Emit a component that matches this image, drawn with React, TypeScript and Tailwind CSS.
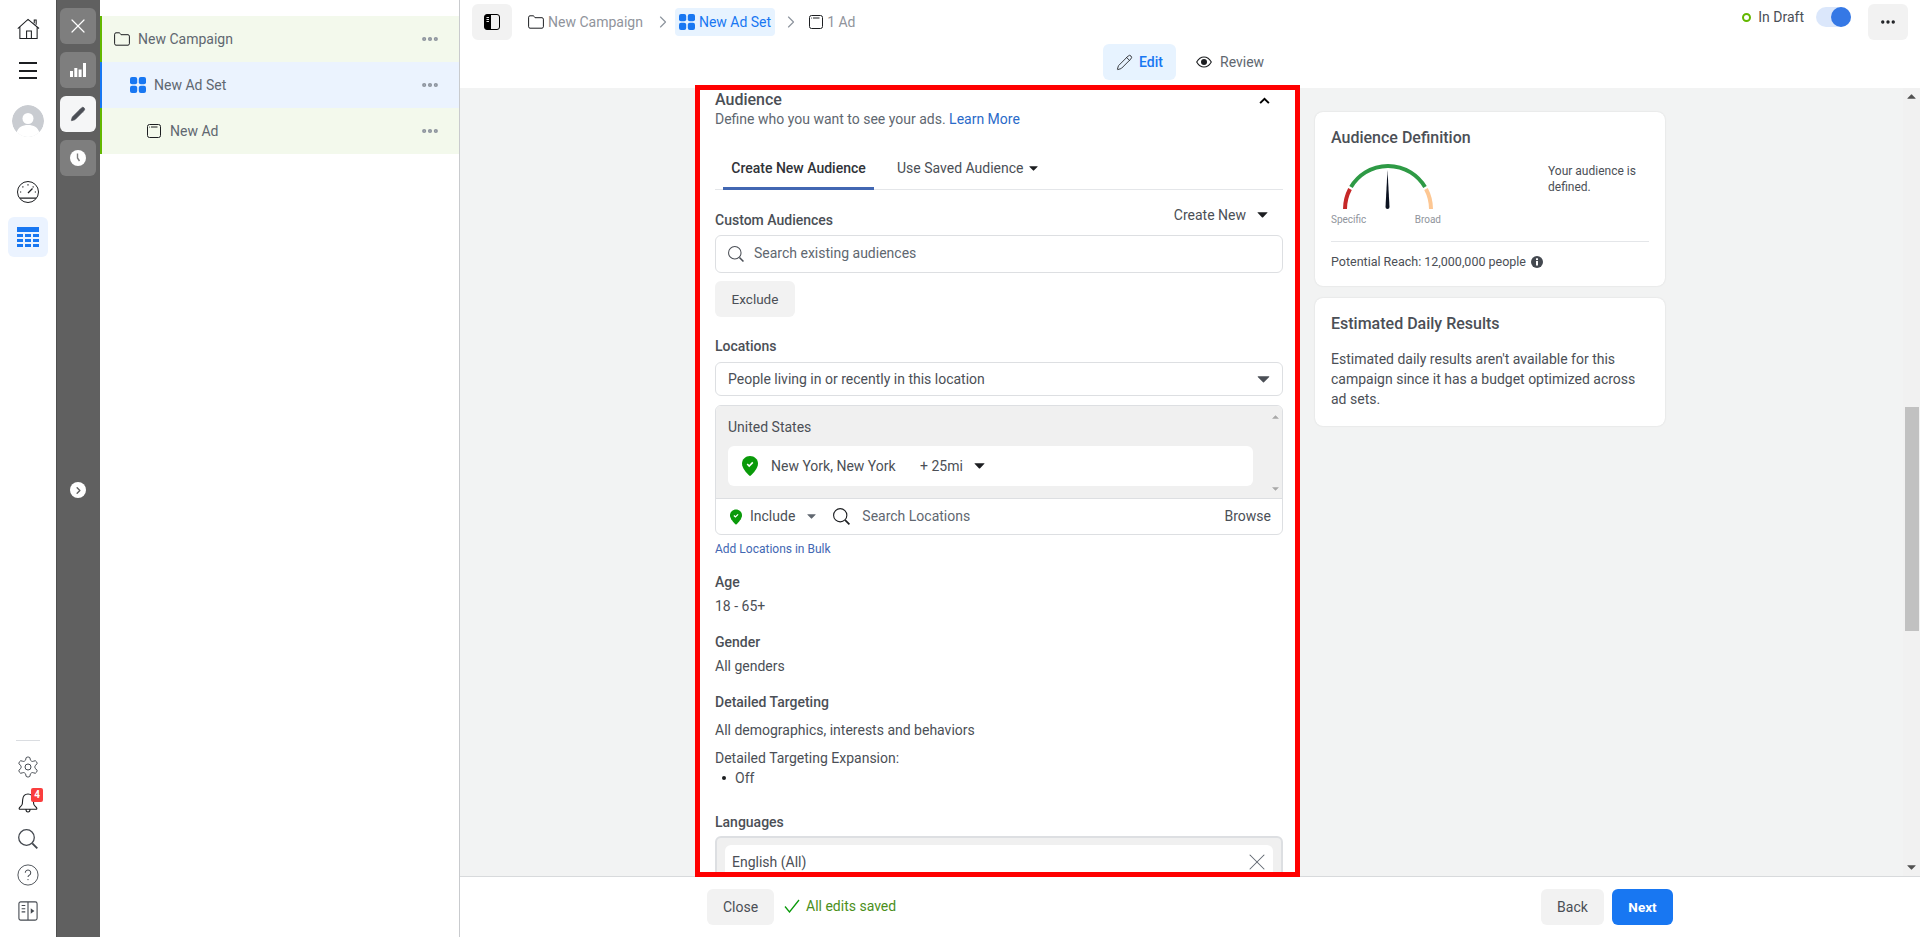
import React from "react";
import { ChevronRight, X, MoreHorizontal, Pencil } from "lucide-react";

const font = { fontFamily: "Roboto, sans-serif" };

function Caret({ cls }: { cls: string }) {
  return (
    <svg viewBox="0 0 10 6" className={cls} fill="currentColor"><path d="M0.3 0.3h9.4a.3.3 0 0 1 .2.5L5.4 5.4a.6.6 0 0 1-.8 0L.1.8A.3.3 0 0 1 .3.3z" /></svg>
  );
}
function Mag({ cls }: { cls: string }) {
  return (
    <svg viewBox="0 0 20 20" className={cls} fill="none" stroke="currentColor">
      <circle cx="8.500" cy="8.500" r="7.800" strokeWidth="1.300" />
      <path d="M14.300 14.300 19.300 19.300" strokeWidth="1.900" />
    </svg>
  );
}
function Folder({ cls }: { cls: string }) {
  return (
    <svg viewBox="0 0 16 14" className={cls} fill="none" stroke="currentColor" strokeWidth="1"><path d="M.6 2.2c0-.8.6-1.4 1.4-1.4h3c.5 0 .8.2 1.1.6l.9 1.3h7c.7 0 1.4.6 1.4 1.4v7.700c0 .8-.7 1.400-1.400 1.400H2c-.8 0-1.400-.6-1.400-1.400z" /></svg>
  );
}
function Grid4({ cls }: { cls: string }) {
  return (
    <svg viewBox="0 0 16 16" className={cls} fill="#1877f2">
      <rect x="0" y="0" width="7.200" height="7.200" rx="2" /><rect x="8.800" y="0" width="7.200" height="7.200" rx="2" />
      <rect x="0" y="8.800" width="7.200" height="7.200" rx="2" /><rect x="8.800" y="8.800" width="7.200" height="7.200" rx="2" />
    </svg>
  );
}
function AdIcon({ cls }: { cls: string }) {
  return (
    <svg viewBox="0 0 14 14" className={cls} fill="none" stroke="currentColor" strokeWidth="1">
      <rect x=".5" y=".5" width="13" height="13" rx="2" /><path d="M4 3h6.500" /><circle cx="2.600" cy="3" r=".5" fill="currentColor" stroke="none" />
    </svg>
  );
}
function Pin({ cls }: { cls: string }) {
  return (
    <svg viewBox="0 0 16 20" className={cls}>
      <path fill="#0a9a0a" d="M8 0c4.400 0 8 3.300 8 7.600 0 4.500-4.600 9.700-7.200 12-.5.4-1.100.4-1.600 0C4.600 17.300 0 12.100 0 7.600 0 3.300 3.600 0 8 0z" />
      <path fill="none" stroke="#fff" strokeWidth="1.600" d="M5.200 8l2 2 3.600-3.600" />
    </svg>
  );
}
function TreeRow({ label, indent, icon, active }: { label: string; indent: string; icon: React.ReactNode; active?: boolean }) {
  return (
    <div className={`h-[46px] flex items-center border-l-2 pr-[19px] ${active ? "bg-[#ebf3fe] border-[#1877f2]" : "bg-[#f3f9ec] border-[#63b800]"} ${indent}`}>
      {icon}
      <span className="text-[14px] text-[#606770] flex-1">{label}</span>
      <MoreHorizontal className="w-[20px] h-[20px] text-[#8d949e]" strokeWidth={3} />
    </div>
  );
}
function Label({ children, cls }: { children: React.ReactNode; cls: string }) {
  return <div className={`text-[14px] leading-[16px] font-medium text-[#4b4f56] ${cls}`}>{children}</div>;
}
function Body({ children, cls }: { children: React.ReactNode; cls: string }) {
  return <div className={`text-[14px] leading-[16px] text-[#4b4f56] ${cls}`}>{children}</div>;
}

function IconRail() {
  return (
    <div className="w-[56px] shrink-0 flex flex-col items-center bg-white text-[#1c1e21]">
      <svg viewBox="0 0 24 22" className="w-[23px] h-[22px] mt-[18px]" fill="none" stroke="#1c1e21" strokeWidth="1.100">
        <path d="M.8 10.500 11.500 1 23 10.500M3 8.800V21h18V8.800M10 21v-8h5v8M18 5V1.600h2v5" />
      </svg>
      <div className="mt-[22px] flex flex-col gap-[5.500px] w-[18px]">
        <div className="h-[2px] bg-[#1c1e21]" /><div className="h-[2px] bg-[#1c1e21]" /><div className="h-[2px] bg-[#1c1e21]" />
      </div>
      <svg viewBox="0 0 32 32" className="w-[32px] h-[32px] mt-[26px] rounded-full">
        <circle cx="16" cy="16" r="16" fill="#c9ccd1" />
        <circle cx="16" cy="13.500" r="5.500" fill="#fff" /><path d="M4.500 28c1.500-6 6-8 11.500-8s10 2 11.500 8A16 16 0 0 1 16 32 16 16 0 0 1 4.500 28z" fill="#fff" />
      </svg>
      <svg viewBox="0 0 22 22" className="w-[22px] h-[22px] mt-[44px]" fill="none" stroke="#1c1e21" strokeWidth="1">
        <circle cx="11" cy="11" r="10.500" />
        <path d="M11 12l4.500-4.500M3 17.200h16" strokeWidth="1.300" />
        <path d="M11 3.300v1.200M5.500 5.500l.8.8M16.500 5.500l-.8.8M3 11h1.200M19 11h-1.200" strokeWidth="1.200" />
      </svg>
      <div className="w-[40px] h-[40px] mt-[14px] rounded-[6px] bg-[#ebf3ff] flex items-center justify-center">
        <svg viewBox="0 0 22 20" className="w-[22px] h-[20px]" fill="#1877f2">
          <rect x="0" y="0" width="22" height="5" />
          <rect x="0" y="7" width="6" height="3" /><rect x="8" y="7" width="6" height="3" /><rect x="16" y="7" width="6" height="3" />
          <rect x="0" y="12" width="6" height="3" /><rect x="8" y="12" width="6" height="3" /><rect x="16" y="12" width="6" height="3" />
          <rect x="0" y="17" width="6" height="3" /><rect x="8" y="17" width="6" height="3" /><rect x="16" y="17" width="6" height="3" />
        </svg>
      </div>
      <div className="flex-1" />
      <div className="w-[24px] h-px bg-[#dadde1]" />
      <svg viewBox="0 0 24 24" className="w-[24px] h-[24px] mt-[14px]" fill="none" stroke="#444950" strokeWidth="1">
        <path d="M12.220 2h-.44a2 2 0 0 0-2 2v.18a2 2 0 0 1-1 1.730l-.43.25a2 2 0 0 1-2 0l-.15-.08a2 2 0 0 0-2.730.73l-.22.380a2 2 0 0 0 .73 2.730l.15.100a2 2 0 0 1 1 1.720v.510a2 2 0 0 1-1 1.740l-.15.090a2 2 0 0 0-.73 2.730l.22.380a2 2 0 0 0 2.730.73l.15-.08a2 2 0 0 1 2 0l.43.250a2 2 0 0 1 1 1.730V20a2 2 0 0 0 2 2h.44a2 2 0 0 0 2-2v-.18a2 2 0 0 1 1-1.730l.43-.25a2 2 0 0 1 2 0l.15.080a2 2 0 0 0 2.730-.73l.22-.390a2 2 0 0 0-.73-2.730l-.15-.080a2 2 0 0 1-1-1.740v-.500a2 2 0 0 1 1-1.740l.15-.090a2 2 0 0 0 .73-2.730l-.22-.380a2 2 0 0 0-2.730-.73l-.15.080a2 2 0 0 1-2 0l-.43-.250a2 2 0 0 1-1-1.730V4a2 2 0 0 0-2-2z" />
        <circle cx="12" cy="12" r="3" />
      </svg>
      <div className="relative mt-[10px] w-[22px] h-[24px] flex justify-center">
        <svg viewBox="0 0 20 20" className="w-[20px] h-[20px] mt-[4px]" fill="none" stroke="#1c1e21" strokeWidth="1.100">
          <path d="M10 1c3 0 5 2.200 5.300 5.500l.4 4.500c.2 1.600 2.300 2.800 3 4 .4.700 0 1.200-.7 1.200H2c-.7 0-1.100-.5-.7-1.200.7-1.200 2.800-2.400 3-4l.4-4.500C5 3.200 7 1 10 1zM8 16.500c0 3.300 4 3.300 4 0" />
        </svg>
        <span className="absolute left-[14px] top-[-1px] w-[12px] h-[14px] rounded-[2px] bg-[#fa3e3e] text-white text-[10px] leading-[14px] font-bold text-center">4</span>
      </div>
      <Mag cls="w-[20px] h-[20px] mt-[16px] text-[#444950]" />
      <svg viewBox="0 0 24 24" className="w-[22px] h-[22px] mt-[15px]" fill="none" stroke="#444950" strokeWidth="1">
        <circle cx="12" cy="12" r="11" />
        <path d="M9 9.500a3 3 0 1 1 4.500 2.600c-1 .6-1.500 1.100-1.500 2.200" strokeWidth="1.100" /><circle cx="12" cy="17" r=".7" fill="#444950" stroke="none" />
      </svg>
      <svg viewBox="0 0 22 22" className="w-[20px] h-[20px] mt-[15px] mb-[16px]" fill="none" stroke="#444950" strokeWidth="1.200">
        <rect x="1" y="1" width="20" height="20" rx="2" /><path d="M11 1v20M4 5h4M4 8.500h4M4 12h4" />
        <path d="M14 8l4 3-4 3z" fill="#444950" stroke="none" />
      </svg>
    </div>
  );
}

function ToolRail() {
  const btn = "w-[36px] h-[36px] rounded-[6px] flex items-center justify-center";
  return (
    <div className="relative w-[44px] shrink-0 bg-[#606060] shadow-[inset_1px_0_0_#4f4f4f] flex flex-col items-center pt-[8px] gap-[8px]">
      <div className={`${btn} bg-[#7e7e7e]`}><X className="w-[24px] h-[24px] text-white" strokeWidth={1.200} /></div>
      <div className={`${btn} bg-[#7e7e7e]`}>
        <svg viewBox="0 0 16 14" className="w-[16px] h-[14px]" fill="#fff"><rect x="0" y="8" width="3" height="6" /><rect x="4.300" y="5" width="3" height="9" /><rect x="8.600" y="6.500" width="3" height="7.500" /><rect x="13" y="0" width="3" height="14" /></svg>
      </div>
      <div className={`${btn} bg-[#f5f6f7]`}><Pencil className="w-[16px] h-[16px] text-[#4b4f56]" fill="#4b4f56" strokeWidth={1} /></div>
      <div className={`${btn} bg-[#7e7e7e]`}>
        <svg viewBox="0 0 16 16" className="w-[16px] h-[16px]"><circle cx="8" cy="8" r="8" fill="#fff" /><path d="M7.500 3.500V8l2 3" fill="none" stroke="#7e7e7e" strokeWidth="1.400" /></svg>
      </div>
      <div className="absolute left-[14px] top-[482px] w-[16px] h-[16px] rounded-full bg-white flex items-center justify-center">
        <ChevronRight className="w-[11px] h-[11px] text-[#606060]" strokeWidth={3} />
      </div>
    </div>
  );
}

function TreePanel() {
  return (
    <div className="w-[360px] shrink-0 pt-[16px] border-r border-[#c9cbce] bg-white">
      <TreeRow label="New Campaign" indent="pl-[12px]" icon={<Folder cls="w-[16px] h-[14px] mr-[8px] text-[#1c1e21]" />} />
      <TreeRow label="New Ad Set" active indent="pl-[28px]" icon={<Grid4 cls="w-[16px] h-[16px] mr-[8px]" />} />
      <TreeRow label="New Ad" indent="pl-[45px]" icon={<AdIcon cls="w-[14px] h-[14px] mr-[9px] text-[#1c1e21]" />} />
    </div>
  );
}

function TopBar() {
  return (
    <div className="h-[88px] shrink-0 bg-white">
      <div className="flex items-center h-[44px] px-[12px]">
        <div className="w-[40px] h-[36px] rounded-[6px] bg-[#f2f2f2] flex items-center justify-center">
          <svg viewBox="0 0 16 16" className="w-[16px] h-[16px]"><rect x="0.500" y="0.500" width="15" height="15" rx="2.500" fill="#f2f2f2" stroke="#000" /><path d="M3 .5h4v15H3a2.500 2.500 0 0 1-2.500-2.500V3A2.500 2.500 0 0 1 3 .5z" fill="#000" /><path d="M2.500 3.500h2.500M2.500 5.500h2.500M2.500 7.500h2.500" stroke="#fff" strokeWidth=".9" /></svg>
        </div>
        <Folder cls="w-[16px] h-[14px] ml-[16px] mr-[4px] text-[#1c1e21]" />
        <span className="text-[14px] text-[#90949c]">New Campaign</span>
        <ChevronRight className="w-[20px] h-[20px] ml-[10px] mr-[2px] text-[#8d949e]" strokeWidth={1.400} />
        <div className="flex items-center h-[28px] px-[4px] rounded-[4px] bg-[#e7f3ff]">
          <Grid4 cls="w-[16px] h-[16px] mr-[4px]" />
          <span className="text-[14px] text-[#1877f2]">New Ad Set</span>
        </div>
        <ChevronRight className="w-[20px] h-[20px] ml-[6px] mr-[4px] text-[#8d949e]" strokeWidth={1.400} />
        <AdIcon cls="w-[14px] h-[14px] ml-[4px] mr-[4px] text-[#1c1e21]" />
        <span className="text-[14px] text-[#90949c]">1 Ad</span>
        <div className="flex-1" />
        <div className="flex items-center self-start h-[34px]">
          <div className="w-[9px] h-[9px] rounded-full border-[2.500px] border-[#63b800]" />
          <span className="ml-[7px] text-[14px] text-[#4b4f56]">In Draft</span>
          <div className="relative ml-[12px] w-[35px] h-[20px] rounded-full bg-[#dbe7fb]">
            <div className="absolute right-0 top-0 w-[20px] h-[20px] rounded-full bg-[#3578e5]" />
          </div>
        </div>
        <div className="ml-[17px] w-[40px] h-[36px] rounded-[6px] bg-[#f2f2f2] flex items-center justify-center">
          <MoreHorizontal className="w-[18px] h-[18px] text-[#1c1e21]" strokeWidth={2.500} />
        </div>
      </div>
      <div className="flex items-center h-[36px] pl-[643px]">
        <div className="flex items-center h-[36px] w-[73px] pl-[13px] gap-[6px] rounded-[6px] bg-[#e7f3ff]">
          <Pencil className="w-[17px] h-[17px] text-[#1c1e21]" strokeWidth={1.200} />
          <span className="text-[14px] font-medium text-[#1877f2]">Edit</span>
        </div>
        <div className="flex items-center h-[36px] ml-[20px] gap-[8px]">
          <svg viewBox="0 0 16 12" className="w-[16px] h-[12px]">
            <path d="M.7 6C2.500 2.800 5 1 8 1s5.500 1.800 7.300 5C13.500 9.200 11 11 8 11S2.500 9.200.7 6z" fill="none" stroke="#1c1e21" strokeWidth="1.100" />
            <circle cx="8" cy="6" r="3" fill="#1c1e21" />
          </svg>
          <span className="text-[14px] text-[#606770]">Review</span>
        </div>
      </div>
    </div>
  );
}

function Form() {
  return (
    <div className="w-[595px] h-full bg-white pl-[15px] pr-[12px] overflow-hidden">
      <div className="text-[16px] leading-[20px] font-medium text-[#4b4f56] pt-[2px] flex justify-between items-center">
        <span>Audience</span>
        <svg viewBox="0 0 12 8" className="w-[11px] h-[7px] mr-[13px]" fill="none" stroke="#000" strokeWidth="2.200"><path d="M1 7l5-5 5 5" /></svg>
      </div>
      <div className="text-[14px] leading-[16px] text-[#606770] mt-[1px]">Define who you want to see your ads. <span className="text-[#2a6ac9]">Learn More</span></div>
      <div className="mt-[22px] h-[41px] border-b border-[#e4e6e9] flex pl-[8px] text-[14px]">
        <div className="w-[151px] h-[41px] border-b-[3px] border-[#4267b2] text-center font-medium pt-[11px] leading-[16px] text-[#303338]">Create New Audience</div>
        <div className="ml-[23px] pt-[11px] leading-[16px] text-[#4b4f56] flex items-start gap-[5px]">Use Saved Audience <Caret cls="w-[9px] h-[5px] mt-[6px] text-[#1c1e21]" /></div>
      </div>
      <div className="flex justify-between mt-[17px]">
        <Label cls="mt-[5px]">Custom Audiences</Label>
        <div className="text-[14px] leading-[16px] h-[16px] text-[#4b4f56] flex items-center mr-[15px]">Create New <Caret cls="w-[11px] h-[6px] ml-[11px] text-[#1c1e21]" /></div>
      </div>
      <div className="mt-[7px] h-[38px] rounded-[6px] border border-[#dddfe2] flex items-center pl-[12px] pb-[1px]">
        <Mag cls="w-[16px] h-[16px] text-[#4b4f56]" />
        <span className="ml-[10px] text-[14px] text-[#606770]">Search existing audiences</span>
      </div>
      <div className="mt-[8px] w-[80px] h-[36px] rounded-[6px] bg-[#f2f2f2] flex items-center justify-center text-[13.500px] text-[#4b4f56]">Exclude</div>
      <Label cls="mt-[21px]">Locations</Label>
      <div className="mt-[8px] h-[34px] rounded-[6px] border border-[#dddfe2] flex items-center justify-between px-[12px] text-[14px] text-[#4b4f56]">
        People living in or recently in this location
        <Caret cls="w-[13px] h-[7px] text-[#4b4f56]" />
      </div>
      <div className="mt-[9px] h-[130px] rounded-[6px] border border-[#dddfe2] overflow-hidden">
        <div className="h-[93px] bg-[#f0f0f0] border-b border-[#dddfe2] pl-[12px] relative">
          <div className="text-[14px] leading-[16px] text-[#4b4f56] pt-[13px] h-[29px]">United States</div>
          <div className="mt-[11px] w-[525px] h-[40px] rounded-[6px] bg-white flex items-center pl-[14px] text-[14px] text-[#4b4f56]">
            <Pin cls="w-[16px] h-[20px]" />
            <span className="ml-[13px] w-[149px]">New York, New York</span>
            <span>+ 25mi</span>
            <Caret cls="w-[11px] h-[6px] ml-[11px] text-[#1c1e21]" />
          </div>
          <Caret cls="absolute right-[3px] top-[9px] w-[7px] h-[4px] rotate-180 text-[#a8a8a8]" />
          <Caret cls="absolute right-[3px] bottom-[7px] w-[7px] h-[4px] text-[#a8a8a8]" />
        </div>
        <div className="h-[35px] flex items-center pl-[14px] pr-[11px] text-[14px] text-[#4b4f56]">
          <Pin cls="w-[12px] h-[16px]" />
          <span className="ml-[8px]">Include</span>
          <Caret cls="w-[9px] h-[5px] ml-[12px] text-[#606770]" />
          <Mag cls="w-[17px] h-[17px] ml-[17px] text-[#1c1e21]" />
          <span className="ml-[12px] text-[#606770]">Search Locations</span>
          <div className="flex-1" />
          <span>Browse</span>
        </div>
      </div>
      <div className="mt-[6px] text-[12px] leading-[16px] text-[#4267b2]">Add Locations in Bulk</div>
      <Label cls="mt-[17px]">Age</Label>
      <Body cls="mt-[8px]">18 - 65+</Body>
      <Label cls="mt-[20px]">Gender</Label>
      <Body cls="mt-[8px]">All genders</Body>
      <Label cls="mt-[20px]">Detailed Targeting</Label>
      <Body cls="mt-[12px]">All demographics, interests and behaviors</Body>
      <Body cls="mt-[12px]">Detailed Targeting Expansion:</Body>
      <div className="mt-[4px] flex items-center pl-[7px] text-[14px] leading-[16px] text-[#4b4f56]">
        <span className="w-[4px] h-[4px] rounded-full bg-[#1c1e21]" /><span className="ml-[9px]">Off</span>
      </div>
      <Label cls="mt-[28px]">Languages</Label>
      <div className="mt-[6px] h-[60px] rounded-[6px] border-2 border-[#dddfe2] bg-[#f0f0f0] pt-[7px] px-[8px]">
        <div className="h-[40px] rounded-[6px] bg-white flex items-center justify-between pl-[7px] pr-[2px] pb-[6px] text-[14px] text-[#4b4f56]">
          English (All)
          <X className="w-[28px] h-[28px] text-[#606770]" strokeWidth={0.900} />
        </div>
      </div>
    </div>
  );
}

function SideCards() {
  return (
    <div className="w-[350px] ml-[20px] pt-[24px] flex flex-col gap-[12px] shrink-0">
      <div className="h-[174px] bg-white rounded-[8px] shadow-[0_0_2px_rgba(0,0,0,0.12)] px-[16px]">
        <div className="pt-[16px] text-[16px] leading-[20px] font-medium text-[#4b4f56]">Audience Definition</div>
        <div className="flex mt-[12px] h-[66px]">
          <div className="w-[110px] shrink-0">
            <svg viewBox="0 0 110 50" className="w-[110px] h-[50px]" fill="none" strokeWidth="4">
              <path d="M14 49A43 43 0 0 1 19 29" stroke="#c62828" />
              <path d="M20 27A43 43 0 0 1 94 27" stroke="#2e9a45" />
              <path d="M95 29A43 43 0 0 1 100 49" stroke="#fdc793" />
              <path d="M56.500 10 54.500 47a2 2 0 0 0 4 0z" fill="#0b1220" />
            </svg>
            <div className="flex justify-between mt-[4px] text-[10px] leading-[12px] text-[#90949c]"><span>Specific</span><span>Broad</span></div>
          </div>
          <div className="ml-[107px] mt-[3px] text-[12px] leading-[16px] text-[#4b4f56] w-[100px]">Your audience is defined.</div>
        </div>
        <div className="border-t border-[#e4e6e9] mt-[15px] pt-[12px] flex items-center text-[12.500px] leading-[16px] text-[#4b4f56]">
          Potential Reach: 12,000,000 people
          <svg viewBox="0 0 12 12" className="w-[12px] h-[12px] ml-[5px]"><circle cx="6" cy="6" r="6" fill="#444950" /><rect x="5" y="5" width="2" height="4.500" fill="#fff" /><rect x="5" y="2.300" width="2" height="1.800" fill="#fff" /></svg>
        </div>
      </div>
      <div className="h-[128px] bg-white rounded-[8px] shadow-[0_0_2px_rgba(0,0,0,0.12)] px-[16px]">
        <div className="pt-[16px] text-[16px] leading-[20px] font-medium text-[#4b4f56]">Estimated Daily Results</div>
        <div className="mt-[15px] text-[14px] leading-[20px] text-[#4b4f56]">Estimated daily results aren't available for this campaign since it has a budget optimized across ad sets.</div>
      </div>
    </div>
  );
}

function Scrollbar() {
  return (
    <div className="absolute right-0 top-0 bottom-0 w-[17px] bg-[#f1f1f1]">
      <Caret cls="absolute left-[4px] top-[6px] w-[9px] h-[5px] rotate-180 text-[#505050]" />
      <div className="absolute left-[2px] right-[1px] top-[319px] h-[224px] bg-[#c1c1c1]" />
      <Caret cls="absolute left-[4px] bottom-[6px] w-[9px] h-[5px] text-[#505050]" />
    </div>
  );
}

function BottomBar() {
  return (
    <div className="h-[61px] shrink-0 bg-white border-t border-[#d8dadc] flex items-center text-[14px]">
      <div className="ml-[247px] w-[67px] h-[36px] rounded-[6px] bg-[#f2f2f2] flex items-center justify-center text-[#4b4f56]">Close</div>
      <svg viewBox="0 0 16 14" className="w-[16px] h-[14px] ml-[10px] mb-[2px]" fill="none" stroke="#0a9a0a" strokeWidth="1.300"><path d="M1 7.500 5.500 13 15 1" /></svg>
      <span className="ml-[6px] mb-[2px] text-[#4b8f1b]">All edits saved</span>
      <div className="flex-1" />
      <div className="w-[63px] h-[36px] rounded-[6px] bg-[#f2f2f2] flex items-center justify-center text-[#4b4f56]">Back</div>
      <div className="ml-[8px] mr-[247px] w-[61px] h-[36px] rounded-[6px] bg-[#1877f2] flex items-center justify-center text-white font-bold text-[13.500px]">Next</div>
    </div>
  );
}

export default function App() {
  return (
    <div className="w-[1920px] h-[937px] flex overflow-hidden bg-white" style={font}>
      <IconRail />
      <ToolRail />
      <TreePanel />
      <div className="flex-1 flex flex-col min-w-0">
        <TopBar />
        <div className="relative flex-1 min-h-0 bg-[#f2f3f3] flex pl-[240px]">
          <Form />
          <SideCards />
          <Scrollbar />
          <div className="absolute left-[235px] top-[-3px] w-[605px] h-[792px] border-[5px] border-[#ff0000] pointer-events-none" />
        </div>
        <BottomBar />
      </div>
    </div>
  );
}
